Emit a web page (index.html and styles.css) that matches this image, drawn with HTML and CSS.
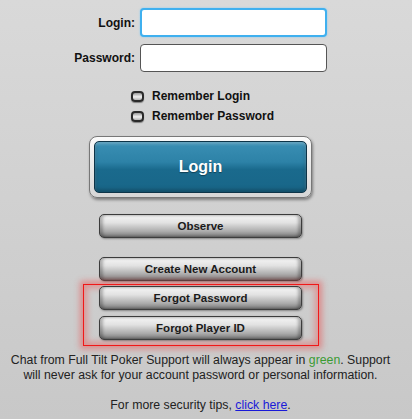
FILE: index.html
```html
<!DOCTYPE html>
<html lang="en">
<head>
  <meta charset="UTF-8">
  <title>Login | Full Tilt Poker</title>
  <link rel="stylesheet" href="styles.css">
</head>
<body>
  <div class="login-panel">
    <!-- Credentials -->
    <div class="field-row">
      <label for="login">Login:</label>
      <input type="text" id="login" class="text-input focused">
    </div>
    <div class="field-row second">
      <label for="password">Password:</label>
      <input type="password" id="password" class="text-input">
    </div>

    <!-- Remember options -->
    <div class="remember-list">
      <div class="remember-row"><span class="check"></span>Remember Login</div>
      <div class="remember-row"><span class="check"></span>Remember Password</div>
    </div>

    <!-- Main login button -->
    <div class="login-frame">
      <button class="login-button">Login</button>
    </div>

    <button class="gray-button observe">Observe</button>
    <button class="gray-button create">Create New Account</button>

    <div class="highlight-box">
      <button class="gray-button">Forgot Password</button>
      <button class="gray-button">Forgot Player ID</button>
    </div>

    <!-- Security notice -->
    <p class="notice">Chat from Full Tilt Poker Support will always appear in <span class="green">green</span>. Support will never ask for your account password or personal information.</p>
    <p class="tips">For more security tips, <a href="#">click here</a>.</p>
  </div>
</body>
</html>
```

FILE: styles.css
```css
* {
  margin: 0;
  padding: 0;
  box-sizing: border-box;
}

body {
  width: 412px;
  height: 419px;
  overflow: hidden;
  font-family: "Liberation Sans", Arial, sans-serif;
  background: linear-gradient(to bottom, #d9d9d9, #c8c8c8);
  color: #222;
}

.login-panel {
  display: flex;
  flex-direction: column;
  align-items: center;
  padding-top: 8px;
  padding-right: 11px;
}

/* Credentials */
.field-row {
  display: flex;
  align-items: center;
  width: 100%;
}

.field-row.second {
  margin-top: 7px;
}

.field-row label {
  width: 136px;
  padding-right: 1px;
  text-align: right;
  font-size: 12px;
  font-weight: bold;
  color: #111;
}

.text-input {
  width: 187px;
  height: 28px;
  margin-left: 4px;
  border: 1px solid #555;
  border-radius: 4px;
  background: #fff;
  outline: none;
}

.text-input.focused {
  height: 29px;
  border: 2px solid #3fb0ef;
  box-shadow: 0 0 2px #7fcaf5;
}

/* Remember options */
.remember-list {
  width: 100%;
  padding-left: 131px;
  margin-top: 14px;
}

.remember-row {
  display: flex;
  align-items: center;
  height: 20px;
  font-size: 12px;
  font-weight: bold;
  color: #111;
}

.check {
  width: 13px;
  height: 11px;
  margin-right: 8px;
  border: 2px solid #2a2a2a;
  border-radius: 4px;
  background: linear-gradient(to bottom, #9a9a9a, #f0f0f0 55%, #b0b0b0);
  box-shadow: 0 1px 1px rgba(0, 0, 0, 0.4);
}

/* Login button */
.login-frame {
  width: 223px;
  height: 62px;
  margin-top: 10px;
  padding: 4px;
  border: 1px solid #777;
  border-radius: 8px;
  background: linear-gradient(to bottom, #fafafa, #d6d6d6);
  box-shadow: 1px 2px 3px rgba(0, 0, 0, 0.4);
}

.login-button {
  width: 100%;
  height: 100%;
  border: 1px solid #0d3448;
  border-radius: 5px;
  background: linear-gradient(to bottom, #3a8fb4 0%, #2d82a7 40%, #1a6a8d 55%, #186688 100%);
  box-shadow: inset 0 2px 3px rgba(255, 255, 255, 0.25), inset 0 -2px 4px rgba(0, 0, 0, 0.3);
  color: #fff;
  font-family: inherit;
  font-size: 16px;
  font-weight: bold;
  text-shadow: 0 1px 1px rgba(0, 0, 0, 0.4);
  cursor: pointer;
}

/* Gray buttons */
.gray-button {
  width: 203px;
  height: 24px;
  border: 1px solid #3c3c3c;
  border-radius: 5px;
  background: linear-gradient(to bottom, #f6f6f6 0%, #e2e2e2 35%, #aaaaaa 75%, #777 100%);
  box-shadow: 1px 1px 2px rgba(0, 0, 0, 0.35), inset 3px 0 3px rgba(0, 0, 0, 0.25), inset -3px 0 3px rgba(0, 0, 0, 0.25);
  color: #1a1a1a;
  font-family: inherit;
  font-size: 11.5px;
  font-weight: bold;
  cursor: pointer;
}

.gray-button.observe {
  margin-top: 16px;
}

.gray-button.create {
  margin-top: 19px;
}

.highlight-box {
  display: flex;
  flex-direction: column;
  align-items: center;
  gap: 6px;
  width: 236px;
  height: 62px;
  margin-top: 3px;
  padding-top: 1px;
  border: 1px solid #f01818;
  box-shadow: 0 0 6px 3px rgba(240, 60, 60, 0.45), inset 0 0 6px 3px rgba(240, 60, 60, 0.4);
}

/* Security notice */
.notice {
  width: 396px;
  margin-top: 7px;
  font-size: 12.3px;
  line-height: 15px;
  text-align: center;
}

.green {
  color: #3b9b34;
}

.tips {
  margin-top: 15px;
  font-size: 12.3px;
  line-height: 15px;
  text-align: center;
}

.tips a {
  color: #1a1ad8;
}
```
